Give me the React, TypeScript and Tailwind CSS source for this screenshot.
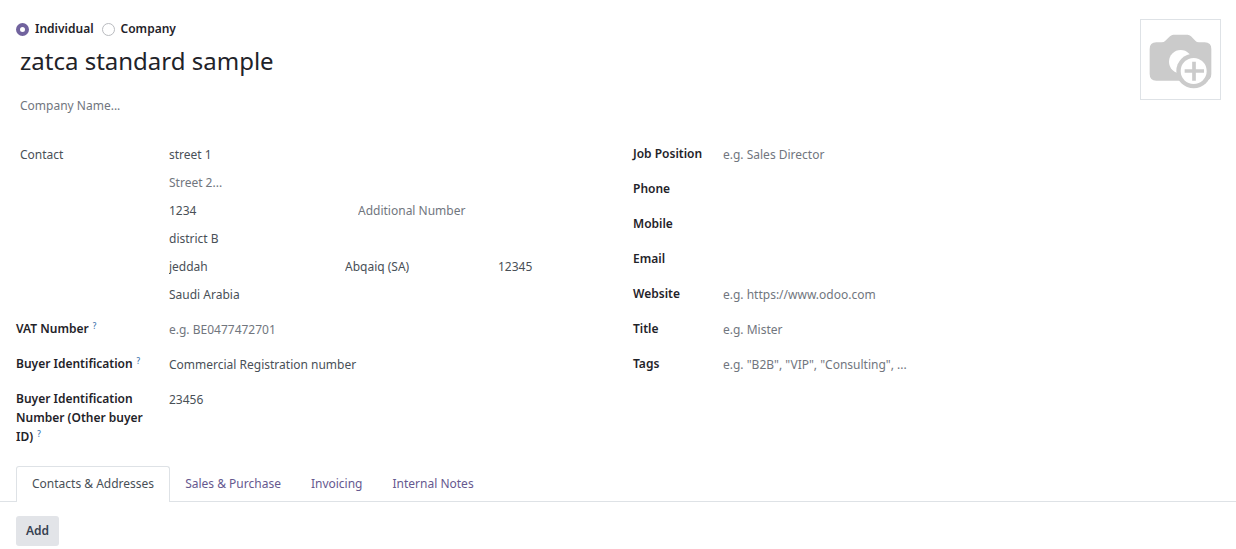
import { useState, type ReactNode } from "react";

const inputClass =
  "block h-5 w-full min-w-0 bg-transparent text-[12px] leading-5 text-[#495057] placeholder:text-[#71767e] placeholder:opacity-100 outline-none";

type RowProps = {
  id: string;
  label: string;
  help?: boolean;
  value?: string;
  placeholder?: string;
  wide?: boolean;
  type?: string;
};

function Row({ id, label, help, value, placeholder, wide, type = "text" }: RowProps) {
  return (
    <div
      className={
        wide
          ? "grid min-h-[35px] grid-cols-[153px_minmax(0,1fr)]"
          : "grid min-h-[35px] grid-cols-[90px_minmax(0,1fr)]"
      }
    >
      <label htmlFor={id} className="pt-1 pr-4 text-[12px] leading-[19px] font-semibold text-[#1f2329]">
        {wide ? label : <span className="whitespace-nowrap">{label}</span>}
        {help && <sup className="ml-1 text-[8px] leading-none font-medium text-[#3b74ad]">?</sup>}
      </label>
      <div className="pt-[5px]">
        <input id={id} type={type} defaultValue={value} placeholder={placeholder} className={inputClass} />
      </div>
    </div>
  );
}

function RadioOption({ label, checked, onSelect }: { label: string; checked: boolean; onSelect: () => void }) {
  return (
    <label className="flex items-center gap-1.5 text-[12px] leading-5 font-semibold text-[#1f2329]">
      <input
        type="radio"
        name="company_type"
        checked={checked}
        onChange={onSelect}
        className="size-[13px] appearance-none rounded-full border border-[#b9bbbf] bg-white checked:border-4 checked:border-[#71639e]"
      />
      {label}
    </label>
  );
}

function AddressLine({ children }: { children: ReactNode }) {
  return <div className="flex h-7 items-center">{children}</div>;
}

function CameraIcon() {
  return (
    <svg viewBox="63 60 237 237" className="size-full" aria-hidden="true">
      <path
        fill="#cbcbcb"
        d="M109 127H125Q132 127 136 122L150 109Q155 104 160 104H203Q208 104 213 109L226 122Q230 127 237 127H254Q274 127 274 147V222Q274 242 254 242H109Q89 242 89 222V147Q89 127 109 127Z"
      />
      <circle cx="182" cy="185" r="35" fill="#fff" />
      <circle cx="221" cy="213" r="52" fill="#cbcbcb" />
      <circle cx="221" cy="213" r="39" fill="#fff" />
      <path d="M194 213H252M222 185V242" stroke="#cbcbcb" strokeWidth="11" />
    </svg>
  );
}

const tabs = ["Contacts & Addresses", "Sales & Purchase", "Invoicing", "Internal Notes"];

export default function App() {
  const [kind, setKind] = useState("Individual");
  const [active, setActive] = useState(tabs[0]);

  return (
    <main className="bg-white font-['Noto_Sans',sans-serif] text-[12px]">
      <form onSubmit={(e) => e.preventDefault()}>
        <header className="flex items-start justify-between pt-[19px] pr-[15px] pl-4">
          <div className="min-w-0 grow">
            <div className="flex gap-2" role="radiogroup" aria-label="Contact type">
              {["Individual", "Company"].map((k) => (
                <RadioOption key={k} label={k} checked={kind === k} onSelect={() => setKind(k)} />
              ))}
            </div>
            <input
              aria-label="Name"
              defaultValue="zatca standard sample"
              className="mt-1 block h-9 w-full bg-transparent px-1 text-[24px] leading-9 text-[#1f2329] outline-none"
            />
            <div className="mt-[17px] px-1">
              <input aria-label="Company name" placeholder="Company Name..." className={inputClass} />
            </div>
          </div>
          <button
            type="button"
            aria-label="Upload photo"
            className="size-[81px] shrink-0 border border-[#dee2e6] bg-white"
          >
            <CameraIcon />
          </button>
        </header>

        <div className="mt-6 grid grid-cols-2 gap-x-[30px] px-4">
          <section className="pt-px">
            <div className="grid grid-cols-[153px_minmax(0,1fr)] pb-1.5">
              <div className="flex h-7 items-center px-1">
                <select aria-label="Address type" className={inputClass + " appearance-none"}>
                  <option>Contact</option>
                </select>
              </div>
              <div>
                <AddressLine>
                  <input aria-label="Street" defaultValue="street 1" className={inputClass} />
                </AddressLine>
                <AddressLine>
                  <input aria-label="Street 2" placeholder="Street 2..." className={inputClass} />
                </AddressLine>
                <AddressLine>
                  <div className="grid w-full grid-cols-[189fr_245fr]">
                    <input aria-label="Building number" defaultValue="1234" className={inputClass} />
                    <input aria-label="Additional number" placeholder="Additional Number" className={inputClass} />
                  </div>
                </AddressLine>
                <AddressLine>
                  <input aria-label="District" defaultValue="district B" className={inputClass} />
                </AddressLine>
                <AddressLine>
                  <div className="grid w-full grid-cols-[176fr_153fr_105fr]">
                    <input aria-label="City" defaultValue="jeddah" className={inputClass} />
                    <input aria-label="State" defaultValue="Abqaiq (SA)" className={inputClass} />
                    <input aria-label="ZIP" defaultValue="12345" className={inputClass} />
                  </div>
                </AddressLine>
                <AddressLine>
                  <input aria-label="Country" defaultValue="Saudi Arabia" className={inputClass} />
                </AddressLine>
              </div>
            </div>
            <Row wide help id="vat" label="VAT Number" placeholder="e.g. BE0477472701" />
            <Row wide help id="buyer" label="Buyer Identification" value="Commercial Registration number" />
            <Row wide help id="buyer-number" label="Buyer Identification Number (Other buyer ID)" value="23456" />
          </section>

          <section>
            <Row id="job" label="Job Position" placeholder="e.g. Sales Director" />
            <Row id="phone" label="Phone" type="tel" />
            <Row id="mobile" label="Mobile" type="tel" />
            <Row id="email" label="Email" type="email" />
            <Row id="website" label="Website" placeholder="e.g. https://www.odoo.com" />
            <Row id="title" label="Title" placeholder="e.g. Mister" />
            <Row id="tags" label="Tags" placeholder={'e.g. "B2B", "VIP", "Consulting", ...'} />
          </section>
        </div>

        <div role="tablist" className="mt-5 flex border-b border-[#dee2e6] px-4">
          {tabs.map((tab) => (
            <button
              key={tab}
              type="button"
              role="tab"
              aria-selected={active === tab}
              onClick={() => setActive(tab)}
              className={
                active === tab
                  ? "-mb-px h-9 rounded-t-[3px] border border-b-0 border-[#dee2e6] bg-white px-[15px] pb-0.5 text-[#495057]"
                  : "-mb-px h-9 border border-b-0 border-transparent px-3.5 pb-0.5 text-[#66598f]"
              }
            >
              {tab}
            </button>
          ))}
        </div>

        <div className="px-4 pt-3.5">
          <button type="button" className="h-[30px] rounded-[3px] bg-[#e2e4e8] px-2.5 font-semibold text-[#374151]">
            Add
          </button>
        </div>
      </form>
    </main>
  );
}
